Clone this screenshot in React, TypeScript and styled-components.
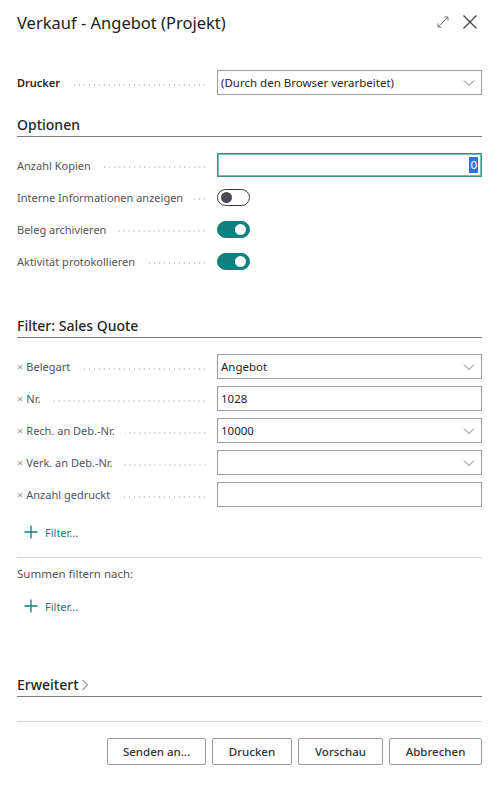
import React from "react";
import styled, { createGlobalStyle } from "styled-components";

const GlobalStyle = createGlobalStyle`
  body {
    margin: 0;
    background: #ffffff;
    font-family: "Segoe UI", "Noto Sans", "Open Sans", sans-serif;
    color: #212121;
  }
`;

const TEAL = "#0f7f80";

const Dialog = styled.div`
  width: 500px;
  box-sizing: border-box;
  padding: 0 18px 0 17px;
`;

const Header = styled.div`
  height: 44px;
  display: flex;
  align-items: center;
  justify-content: space-between;
`;

const Title = styled.h1`
  margin: 0;
  font-size: 16.5px;
  font-weight: 400;
  color: #212121;
`;

const HeaderIcons = styled.div`
  display: flex;
  align-items: center;
  gap: 12px;
  margin-right: 4px;
`;

const Section = styled.div<{ $top: number }>`
  margin-top: ${(p) => p.$top}px;
`;

const SectionTitle = styled.h2<{ $top: number }>`
  margin: ${(p) => p.$top}px 0 0;
  font-size: 14px;
  line-height: 20px;
  font-weight: 500;
  color: #262626;
  padding-bottom: 1px;
  border-bottom: 1px solid #7a7a7a;
  display: flex;
  align-items: center;
  gap: 2px;
`;

const Rows = styled.div<{ $gap: number; $top: number }>`
  display: flex;
  flex-direction: column;
  gap: ${(p) => p.$gap}px;
  margin-top: ${(p) => p.$top}px;
`;

const Row = styled.div<{ $h: number }>`
  display: grid;
  grid-template-columns: 200px 1fr;
  align-items: center;
  height: ${(p) => p.$h}px;
`;

const Label = styled.div<{ $strong?: boolean; $filter?: boolean }>`
  display: flex;
  align-items: center;
  padding-right: 10px;
  font-size: 11px;
  color: ${(p) => (p.$strong ? "#262626" : p.$filter ? "#4b5563" : "#555555")};
  font-weight: ${(p) => (p.$strong ? 600 : 400)};
  white-space: nowrap;
  overflow: hidden;
`;

const Remove = styled.span`
  color: #9a9a9a;
  font-size: 11px;
  margin-right: 3px;
`;

const Leader = styled.span`
  flex: 1;
  margin-left: 10px;
  height: 2px;
  transform: translateY(2px);
  background-image: radial-gradient(circle, #c8c8c8 0.7px, transparent 0.9px);
  background-size: 5px 2px;
  background-position: right center;
  background-repeat: repeat-x;
`;

const Field = styled.div<{ $focus?: boolean }>`
  height: 100%;
  box-sizing: border-box;
  border: 1px solid ${(p) => (p.$focus ? "#3f8f90" : "#9d9d9d")};
  box-shadow: ${(p) => (p.$focus ? "inset 0 0 0 1px #7fb8b8" : "none")};
  display: flex;
  align-items: center;
  justify-content: space-between;
  padding: 0 6px 0 3px;
  font-size: 11.5px;
  color: #262626;
`;

const Selected = styled.span`
  background: #2f73e0;
  color: #ffffff;
  font-size: 11.5px;
  line-height: 16px;
  padding: 0 1px;
  margin-right: -3px;
`;

const Toggle = styled.div<{ $on: boolean }>`
  width: 33px;
  height: 17px;
  box-sizing: border-box;
  border-radius: 9px;
  border: 1px solid ${(p) => (p.$on ? TEAL : "#3a3a3a")};
  background: ${(p) => (p.$on ? TEAL : "#ffffff")};
  display: flex;
  align-items: center;
  justify-content: ${(p) => (p.$on ? "flex-end" : "flex-start")};
  padding: 0 3px;
`;

const Knob = styled.span<{ $on: boolean }>`
  width: 11px;
  height: 11px;
  border-radius: 50%;
  background: ${(p) => (p.$on ? "#ffffff" : "#4a4a58")};
`;

const AddFilter = styled.div<{ $top: number }>`
  margin-top: ${(p) => p.$top}px;
  height: 24px;
  display: flex;
  align-items: center;
  gap: 7px;
  padding-left: 7px;
  color: ${TEAL};
  font-size: 11px;
`;

const Divider = styled.hr<{ $top: number }>`
  margin: ${(p) => p.$top}px 0 0;
  border: 0;
  border-top: 1px solid #d6d6d6;
`;

const Note = styled.div`
  margin-top: 6px;
  line-height: 20px;
  font-size: 11.5px;
  color: #555555;
`;

const Footer = styled.div`
  margin-top: 16px;
  display: flex;
  justify-content: flex-end;
  gap: 6px;
`;

const Button = styled.button<{ $w: number }>`
  width: ${(p) => p.$w}px;
  height: 27px;
  background: #ffffff;
  border: 1px solid #9a9a9a;
  border-radius: 2px;
  font-family: inherit;
  font-size: 11.5px;
  font-weight: 500;
  color: #333333;
`;

const Chevron = () => (
  <svg width="12" height="8" viewBox="0 0 12 8">
    <path d="M1 1.5 L6 6.5 L11 1.5" fill="none" stroke="#777" strokeWidth="1" />
  </svg>
);

const Plus = () => (
  <svg width="14" height="14" viewBox="0 0 14 14">
    <path d="M7 0.5 V13.5 M0.5 7 H13.5" stroke={TEAL} strokeWidth="1.3" />
  </svg>
);

type FieldRowProps = {
  label: string;
  value?: string;
  select?: boolean;
  strong?: boolean;
  filter?: boolean;
  focus?: boolean;
  h?: number;
};

const FieldRow = (props: FieldRowProps) => (
  <Row $h={props.h ?? 25}>
    <Label $strong={props.strong} $filter={props.filter}>
      {props.filter && <Remove>×</Remove>}
      {props.label}
      <Leader />
    </Label>
    <Field $focus={props.focus}>
      <span>{props.value}</span>
      {props.select && <Chevron />}
      {props.focus && <Selected>0</Selected>}
    </Field>
  </Row>
);

const ToggleRow = (props: { label: string; on: boolean }) => (
  <Row $h={24}>
    <Label>
      {props.label}
      <Leader />
    </Label>
    <Toggle $on={props.on}>
      <Knob $on={props.on} />
    </Toggle>
  </Row>
);

export default function App() {
  return (
    <Dialog>
      <GlobalStyle />
      <Header>
        <Title>Verkauf - Angebot (Projekt)</Title>
        <HeaderIcons>
          <svg width="14" height="14" viewBox="0 0 14 14">
            <path
              d="M2 12 L12 2 M8.5 2 H12 V5.5 M2 8.5 V12 H5.5"
              fill="none"
              stroke="#777"
              strokeWidth="1"
            />
          </svg>
          <svg width="16" height="16" viewBox="0 0 16 16">
            <path d="M1.5 1.5 L14.5 14.5 M14.5 1.5 L1.5 14.5" stroke="#444" strokeWidth="1.3" />
          </svg>
        </HeaderIcons>
      </Header>

      <Section $top={26}>
        <FieldRow label="Drucker" value="(Durch den Browser verarbeitet)" select strong />
      </Section>

      <SectionTitle $top={20}>Optionen</SectionTitle>
      <Rows $gap={8} $top={16}>
        <FieldRow label="Anzahl Kopien" focus h={24} />
        <ToggleRow label="Interne Informationen anzeigen" on={false} />
        <ToggleRow label="Beleg archivieren" on />
        <ToggleRow label="Aktivität protokollieren" on />
      </Rows>

      <SectionTitle $top={43}>Filter: Sales Quote</SectionTitle>
      <Rows $gap={7} $top={16}>
        <FieldRow label="Belegart" value="Angebot" select filter />
        <FieldRow label="Nr." value="1028" filter />
        <FieldRow label="Rech. an Deb.-Nr." value="10000" select filter />
        <FieldRow label="Verk. an Deb.-Nr." select filter />
        <FieldRow label="Anzahl gedruckt" filter />
      </Rows>
      <AddFilter $top={13}>
        <Plus />
        Filter...
      </AddFilter>

      <Divider $top={13} />
      <Note>Summen filtern nach:</Note>
      <AddFilter $top={10}>
        <Plus />
        Filter...
      </AddFilter>

      <SectionTitle $top={57}>
        Erweitert
        <svg width="8" height="12" viewBox="0 0 8 12">
          <path d="M1.5 1 L6.5 6 L1.5 11" fill="none" stroke="#555" strokeWidth="1" />
        </svg>
      </SectionTitle>

      <Divider $top={24} />
      <Footer>
        <Button $w={99}>Senden an...</Button>
        <Button $w={80}>Drucken</Button>
        <Button $w={85}>Vorschau</Button>
        <Button $w={93}>Abbrechen</Button>
      </Footer>
    </Dialog>
  );
}
